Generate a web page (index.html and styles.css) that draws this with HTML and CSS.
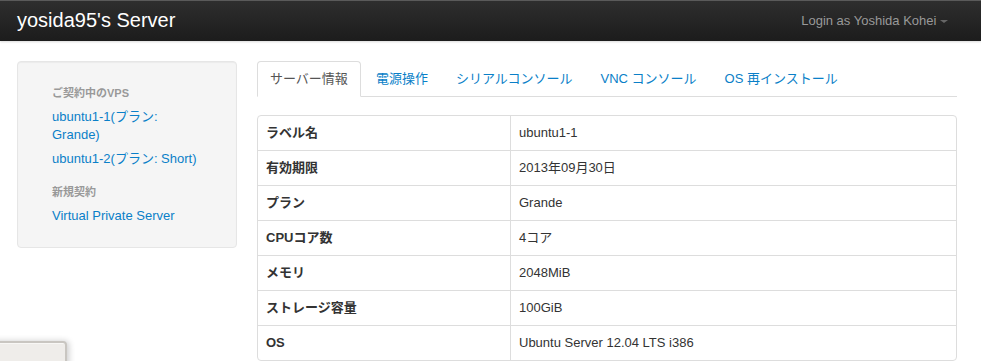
FILE: index.html
```html
<!DOCTYPE html>
<html lang="ja">
<head>
  <meta charset="UTF-8">
  <title>yosida95's Server</title>
  <link rel="stylesheet" href="styles.css">
</head>
<body>

<div class="navbar">
  <a class="brand" href="#">yosida95's Server</a>
  <a class="user-menu" href="#">Login as Yoshida Kohei <span class="caret"></span></a>
</div>

<div class="container">
  <div class="sidebar">
    <ul class="nav-list">
      <li class="nav-header">ご契約中のVPS</li>
      <li><a href="#">ubuntu1-1(プラン: Grande)</a></li>
      <li><a href="#">ubuntu1-2(プラン: Short)</a></li>
      <li class="nav-header">新規契約</li>
      <li><a href="#">Virtual Private Server</a></li>
    </ul>
  </div>

  <div class="content">
    <ul class="nav-tabs">
      <li class="active"><a href="#">サーバー情報</a></li>
      <li><a href="#">電源操作</a></li>
      <li><a href="#">シリアルコンソール</a></li>
      <li><a href="#">VNC コンソール</a></li>
      <li><a href="#">OS 再インストール</a></li>
    </ul>

    <table class="table-bordered">
      <tr><th>ラベル名</th><td>ubuntu1-1</td></tr>
      <tr><th>有効期限</th><td>2013年09月30日</td></tr>
      <tr><th>プラン</th><td>Grande</td></tr>
      <tr><th>CPUコア数</th><td>4コア</td></tr>
      <tr><th>メモリ</th><td>2048MiB</td></tr>
      <tr><th>ストレージ容量</th><td>100GiB</td></tr>
      <tr><th>OS</th><td>Ubuntu Server 12.04 LTS i386</td></tr>
    </table>
  </div>
</div>

<div class="desktop-window"></div>

</body>
</html>
```

FILE: styles.css
```css
* {
  box-sizing: border-box;
}

body {
  margin: 0;
  font-family: "Liberation Sans", "Noto Sans CJK JP", sans-serif;
  font-size: 13px;
  line-height: 18px;
  color: #333;
  background-color: #fff;
  overflow: hidden;
}

a {
  color: #0a7fc8;
  text-decoration: none;
}

ul {
  list-style: none;
  margin: 0;
  padding: 0;
}

/* navbar */
.navbar {
  height: 41px;
  display: flex;
  align-items: center;
  justify-content: space-between;
  padding: 0 33px 0 17px;
  background: linear-gradient(#2e2e2e, #1c1c1c);
  border-top: 1px solid #5a5a5a;
  box-shadow: 0 1px 2px rgba(0,0,0,0.15);
}

.brand {
  color: #fff;
  font-size: 20px;
  line-height: 1;
  padding-bottom: 2px;
}

.user-menu {
  color: #999;
  font-size: 13px;
}

.caret {
  display: inline-block;
  width: 0;
  height: 0;
  margin-left: 0;
  vertical-align: middle;
  border-top: 3px solid #666;
  border-left: 4px solid transparent;
  border-right: 4px solid transparent;
}

/* page */
.container {
  display: flex;
  gap: 20px;
  padding: 20px 24px 0 17px;
}

.sidebar {
  width: 220px;
  flex-shrink: 0;
  align-self: flex-start;
  padding: 19px;
  background-color: #f5f5f5;
  border: 1px solid #e6e6e6;
  border-radius: 4px;
  box-shadow: inset 0 1px 1px rgba(0,0,0,0.04);
}

.nav-list li {
  padding: 3px 15px;
}

.nav-list .nav-header {
  font-size: 11px;
  font-weight: bold;
  color: #999;
}

.nav-list li + .nav-header {
  margin-top: 9px;
}

.content {
  flex: 1;
}

/* tabs */
.nav-tabs {
  display: flex;
  border-bottom: 1px solid #ddd;
  margin-bottom: 18px;
}

.nav-tabs li {
  margin-right: 2px;
  margin-bottom: -1px;
}

.nav-tabs a {
  display: block;
  padding: 8px 12px;
  border: 1px solid transparent;
  border-radius: 4px 4px 0 0;
}

.nav-tabs .active a {
  color: #555;
  background-color: #fff;
  border-color: #ddd #ddd transparent;
}

/* table */
.table-bordered {
  width: 100%;
  border-collapse: separate;
  border-spacing: 0;
  border: 1px solid #ddd;
  border-radius: 4px;
}

.table-bordered th,
.table-bordered td {
  padding: 8px;
  text-align: left;
  vertical-align: top;
  border-top: 1px solid #ddd;
}

.table-bordered tr:first-child th,
.table-bordered tr:first-child td {
  border-top: 0;
}

.table-bordered th {
  width: 252px;
  font-weight: bold;
}

.table-bordered td {
  border-left: 1px solid #ddd;
}

/* corner of a desktop window behind the browser */
.desktop-window {
  position: absolute;
  left: -10px;
  top: 341px;
  width: 77px;
  height: 40px;
  background-color: #efedea;
  border: 2px solid #c9c6c1;
  border-radius: 0 4px 0 0;
  box-shadow: inset 1px 1px 0 #f8f7f5, 2px 0 6px rgba(0,0,0,0.2);
}
```
